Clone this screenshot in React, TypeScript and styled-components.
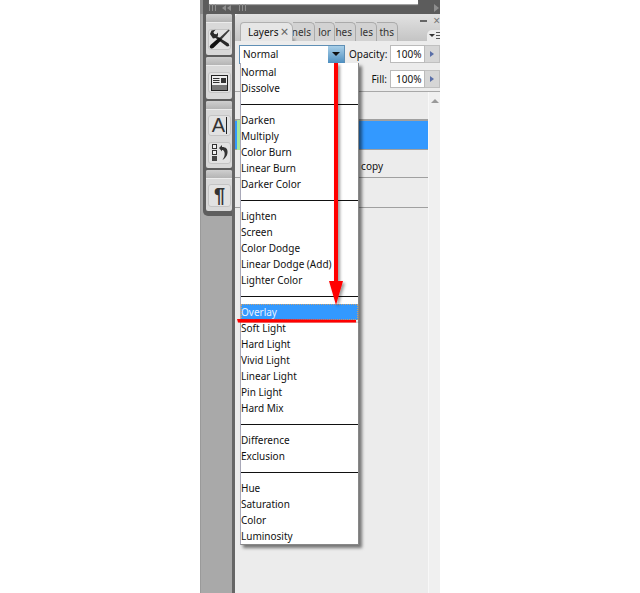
import React from 'react';
import styled, { createGlobalStyle } from 'styled-components';

const blendGroups = [
  ['Normal', 'Dissolve'],
  ['Darken', 'Multiply', 'Color Burn', 'Linear Burn', 'Darker Color'],
  ['Lighten', 'Screen', 'Color Dodge', 'Linear Dodge (Add)', 'Lighter Color'],
  ['Overlay', 'Soft Light', 'Hard Light', 'Vivid Light', 'Linear Light', 'Pin Light', 'Hard Mix'],
  ['Difference', 'Exclusion'],
  ['Hue', 'Saturation', 'Color', 'Luminosity'],
];

const backTabs = [
  { label: 'nels', width: 22 },
  { label: 'lor', width: 20 },
  { label: 'hes', width: 21 },
  { label: 'les', width: 21 },
  { label: 'ths', width: 21 },
];

const WrenchIcon = () => (
  <svg width="21" height="20" viewBox="0 0 21 20">
    {/* wrench */}
    <path
      d="M1 5 L2.5 1.5 L6.5 0.8 L4.4 3.2 L5.4 5 L7.6 5.2 L9 3.4 L9 6.2 L8.4 7.4 L19.6 14.6 L20.4 17 L18 17.4 L6.6 9 L4 9.4 Z"
      fill="#2a2a2a"
    />
    {/* screwdriver shaft */}
    <path d="M19.6 0.6 L20.6 1.6 L12.4 10.4 L10.6 8.8 Z" fill="#3c3c3c" />
    {/* screwdriver handle */}
    <path
      d="M10.6 8.4 L12.8 10.6 L11.6 12 L4.6 18.8 C3.2 20 0.6 19.6 0.8 17.4 C0.9 16.6 1.4 16 2 15.4 L9 9.4 Z"
      fill="#111"
    />
  </svg>
);

const ParagraphsIcon = () => (
  <svg width="17" height="16" viewBox="0 0 17 16">
    <rect x="0.5" y="0.5" width="16" height="15" fill="#eee" stroke="#222" />
    <rect x="10" y="3" width="5" height="5" fill="#333" />
    <path d="M2 3.5 H8.5 M2 5.5 H8.5 M2 7.5 H8.5" stroke="#333" />
    <rect x="1" y="10" width="15" height="5" fill="#777" />
  </svg>
);

const StylesIcon = () => (
  <svg width="18" height="18" viewBox="0 0 18 18">
    <rect x="1.5" y="0.5" width="4" height="4" fill="#f2f2f2" stroke="#333" />
    <rect x="1.5" y="6.5" width="4" height="4" fill="#f2f2f2" stroke="#333" />
    <rect x="1" y="12" width="5" height="5" fill="#444" />
    <path d="M8 4 L11 1 V3 C15 3 17 5 16.5 9 C16.2 12 14 14.5 11.5 16 C13.5 13 14 10.5 13.5 8.5 C13 6.5 12 6 11 6 V7.5 Z" fill="#333" />
  </svg>
);

const Annotations = () => (
  <Overlay width="240" height="593" viewBox="200 0 240 593">
    <defs>
      <filter id="soft" x="-30%" y="-5%" width="180%" height="115%">
        <feDropShadow dx="2" dy="2" stdDeviation="1.5" floodColor="#000" floodOpacity="0.4" />
      </filter>
    </defs>
    <rect x="240" y="37" width="53" height="3" fill="#f00" filter="url(#soft)" />
    <path d="M334 63 H338 V281 H343 L336 305 L329 281 H334 Z" fill="#f00" filter="url(#soft)" />
    <path d="M237 319 L356 320 V322.5 L238 322.5 Z" fill="#f00" filter="url(#soft)" />
  </Overlay>
);

export default function App() {
  return (
    <>
      <GlobalStyle />
      <Stage>
        <TopStrip>
          <Preview />
          <StripControls>
            <Grip />
            <Collapse>
              <LeftTriangle />
              <LeftTriangle />
            </Collapse>
            <Grip />
            <StripEnd />
          </StripControls>
        </TopStrip>
        <Workspace>
          <Dock>
            <DockFrame>
              <DockCard $height={41}>
                <CardHeader />
                <CardButtons>
                  <DockButton $height={21}>
                    <WrenchIcon />
                  </DockButton>
                </CardButtons>
              </DockCard>
              <DockCard $height={42}>
                <CardHeader />
                <CardButtons>
                  <DockButton $height={21}>
                    <ParagraphsIcon />
                  </DockButton>
                </CardButtons>
              </DockCard>
              <DockCard $height={67}>
                <CardHeader />
                <CardButtons>
                  <DockButton $height={21}>
                    <BigGlyph>A</BigGlyph>
                    <Caret />
                  </DockButton>
                  <DockButton $height={22}>
                    <StylesIcon />
                  </DockButton>
                </CardButtons>
              </DockCard>
              <DockCard $height={41}>
                <CardHeader />
                <CardButtons>
                  <DockButton $height={23}>
                    <BigGlyph $bold>¶</BigGlyph>
                  </DockButton>
                </CardButtons>
              </DockCard>
            </DockFrame>
          </Dock>
          <Panel>
            <TabBar>
              <ActiveTab>
                Layers<TabClose>×</TabClose>
              </ActiveTab>
              {backTabs.map((tab) => (
                <BackTab key={tab.label} $width={tab.width}>
                  {tab.label}
                </BackTab>
              ))}
              <WindowButtons>
                <Minimize />
                <CloseGlyph>×</CloseGlyph>
              </WindowButtons>
              <PanelMenu>
                <MenuTriangle />
                <MenuLines />
              </PanelMenu>
            </TabBar>
            <OptionsRow>
              <BlendSelect>
                <BlendValue>Normal</BlendValue>
                <BlendButton>
                  <BlendTriangle />
                </BlendButton>
              </BlendSelect>
              <FieldLabel>Opacity:</FieldLabel>
              <PercentField>100%</PercentField>
              <Stepper>
                <StepperArrow />
              </Stepper>
            </OptionsRow>
            <FillRow>
              <FieldLabel>Fill:</FieldLabel>
              <PercentField>100%</PercentField>
              <Stepper>
                <StepperArrow />
              </Stepper>
            </FillRow>
            <LayersArea>
              <LayerList>
                <LayerRow $height={28} />
                <LayerRow $height={30} $selected />
                <LayerRow $height={28}>
                  <LayerName>copy</LayerName>
                </LayerRow>
                <LayerRow $height={30} />
              </LayerList>
              <Scrollbar>
                <ScrollUp />
              </Scrollbar>
            </LayersArea>
          </Panel>
        </Workspace>
        <BlendMenu>
          {blendGroups.map((group, index) => (
            <React.Fragment key={group[0]}>
              {index > 0 && <MenuDivider />}
              {group.map((name) => (
                <MenuItem key={name} $active={name === 'Overlay'}>
                  {name}
                </MenuItem>
              ))}
            </React.Fragment>
          ))}
        </BlendMenu>
        <GreenMark />
        <Annotations />
      </Stage>
    </>
  );
}

const GlobalStyle = createGlobalStyle`
  html, body {
    margin: 0;
    padding: 0;
    background: #fff;
    overflow: hidden;
  }
  * {
    box-sizing: border-box;
  }
`;

const uiFont = `"Noto Sans", "Liberation Sans", sans-serif`;

const Stage = styled.div`
  position: relative;
  display: flex;
  flex-direction: column;
  width: 240px;
  height: 593px;
  margin-left: 200px;
  overflow: hidden;
  font-family: ${uiFont};
  font-size: 10px;
  color: #111;
`;

const TopStrip = styled.div`
  flex: none;
  height: 14px;
  background: #5c5c5c;
  border-left: 3px solid #8c8c8c;
`;

const Preview = styled.div`
  width: 209px;
  height: 4px;
  margin-left: 6px;
  background: #fff;
  box-shadow: 0 1px 1px #aaa;
`;

const StripControls = styled.div`
  display: flex;
  align-items: flex-start;
  height: 7px;
  padding-left: 6px;
`;

const Grip = styled.span`
  width: 7px;
  height: 7px;
  background: repeating-linear-gradient(90deg, #8e8e8e 0 1px, transparent 1px 3px);
`;

const Collapse = styled.span`
  display: flex;
  align-items: center;
  gap: 1px;
  width: 23px;
  height: 7px;
  padding-left: 6px;
`;

const LeftTriangle = styled.span`
  width: 0;
  height: 0;
  border-top: 3px solid transparent;
  border-bottom: 3px solid transparent;
  border-right: 4px solid #8e8e8e;
`;

const StripEnd = styled.span`
  width: 0;
  height: 0;
  margin-left: auto;
  margin-right: 1px;
  border-top: 4px solid transparent;
  border-bottom: 4px solid transparent;
  border-left: 5px solid #8e8e8e;
`;

const Workspace = styled.div`
  flex: 1;
  display: flex;
  min-height: 0;
`;

const Dock = styled.div`
  flex: none;
  width: 35px;
  background: #a9a9a9;
  border-left: 1px solid #9a9a9a;
  border-right: 3px solid #666;
`;

const DockFrame = styled.div`
  display: flex;
  flex-direction: column;
  gap: 2px;
  height: 202px;
  margin-left: 2px;
  padding-left: 3px;
  background: #5e5e5e;
  border-bottom-left-radius: 5px;
`;

const DockCard = styled.div<{ $height: number }>`
  flex: none;
  display: flex;
  flex-direction: column;
  width: 26px;
  height: ${(props) => props.$height}px;
  background: #d9d9d9;
  border-radius: 2px;
`;

const CardHeader = styled.div`
  flex: none;
  height: 9px;
  background: linear-gradient(#cfcfcf, #b4b4b4);
  border-bottom: 1px solid #ececec;
  border-radius: 2px 2px 0 0;
`;

const CardButtons = styled.div`
  flex: 1;
  display: flex;
  flex-direction: column;
  align-items: center;
  justify-content: center;
  gap: 6px;
  padding-left: 1px;
`;

const DockButton = styled.div<{ $height: number }>`
  flex: none;
  display: flex;
  align-items: center;
  justify-content: center;
  width: 23px;
  height: ${(props) => props.$height}px;
  background: #e2e2e2;
  border: 1px solid #c4c4c4;
  border-radius: 3px;
`;

const BigGlyph = styled.span<{ $bold?: boolean }>`
  font-family: "Liberation Sans", sans-serif;
  font-size: 20px;
  font-weight: ${(props) => (props.$bold ? 700 : 400)};
  line-height: 20px;
  color: #333;
`;

const Caret = styled.span`
  width: 1px;
  height: 17px;
  margin-left: 1px;
  background: #222;
`;

const Panel = styled.div`
  flex: 1;
  display: flex;
  flex-direction: column;
  min-width: 0;
  background: #ececec;
  border-top-left-radius: 4px;
`;

const TabBar = styled.div`
  position: relative;
  flex: none;
  display: flex;
  align-items: flex-end;
  height: 27px;
  padding-left: 5px;
  background: linear-gradient(#e2e2e2, #c4c4c4);
  border-top-left-radius: 4px;
`;

const ActiveTab = styled.div`
  position: relative;
  z-index: 1;
  display: flex;
  align-items: center;
  width: 53px;
  height: 19px;
  padding-left: 7px;
  background: #e6e6e6;
  border: 1px solid #b0b0b0;
  border-bottom: none;
  border-radius: 4px 6px 0 0;
`;

const TabClose = styled.span`
  margin-left: 2px;
  font-size: 14px;
  line-height: 14px;
  color: #666;
`;

const BackTab = styled.div<{ $width: number }>`
  display: flex;
  align-items: center;
  justify-content: flex-end;
  width: ${(props) => props.$width}px;
  height: 19px;
  padding-right: 3px;
  background: #d2d2d2;
  border: 1px solid #aaa;
  border-left: none;
  border-bottom: none;
  border-radius: 0 5px 0 0;
  color: #333;
  overflow: hidden;
  white-space: nowrap;
`;

const WindowButtons = styled.div`
  position: absolute;
  top: 3px;
  right: 0;
  display: flex;
  align-items: center;
  gap: 6px;
  height: 8px;
`;

const Minimize = styled.span`
  width: 7px;
  height: 2px;
  background: #666;
`;

const CloseGlyph = styled.span`
  font-size: 12px;
  line-height: 8px;
  color: #777;
`;

const PanelMenu = styled.div`
  position: absolute;
  right: 0;
  bottom: 0;
  display: flex;
  align-items: center;
  gap: 1px;
  width: 13px;
  height: 11px;
  padding-left: 2px;
  background: #ececec;
  border-top-left-radius: 5px;
`;

const MenuTriangle = styled.span`
  width: 0;
  height: 0;
  border-left: 3px solid transparent;
  border-right: 3px solid transparent;
  border-top: 3px solid #333;
`;

const MenuLines = styled.span`
  width: 5px;
  height: 7px;
  border-top: 1px solid #555;
  border-bottom: 1px solid #555;
  background: linear-gradient(#555, #555) center / 100% 1px no-repeat;
`;

const OptionsRow = styled.div`
  flex: none;
  display: flex;
  align-items: center;
  height: 24px;
  padding: 2px 0 0 4px;
`;

const FillRow = styled.div`
  flex: none;
  display: flex;
  justify-content: flex-end;
  align-items: center;
  height: 27px;
  padding-top: 2px;
  border-bottom: 1px solid #a8a8a8;
`;

const BlendSelect = styled.div`
  display: flex;
  width: 106px;
  height: 19px;
  margin-right: 4px;
  background: #fff;
  border: 1px solid #5f8fb5;
`;

const BlendValue = styled.div`
  flex: 1;
  padding-left: 3px;
  line-height: 17px;
`;

const BlendButton = styled.div`
  display: flex;
  align-items: center;
  justify-content: center;
  width: 16px;
  background: linear-gradient(#a8cfe8, #4e8fc0);
`;

const BlendTriangle = styled.span`
  width: 0;
  height: 0;
  border-left: 4px solid transparent;
  border-right: 4px solid transparent;
  border-top: 4px solid #111;
`;

const FieldLabel = styled.span`
  width: 38px;
  margin-right: 3px;
  text-align: right;
  white-space: nowrap;
`;

const PercentField = styled.div`
  width: 35px;
  height: 18px;
  padding-left: 5px;
  background: #fff;
  border: 1px solid #bbb;
  line-height: 16px;
`;

const Stepper = styled.div`
  display: flex;
  align-items: center;
  justify-content: center;
  width: 15px;
  height: 18px;
  background: #d6d6d6;
  border: 1px solid #c0c0c0;
  border-left: none;
`;

const StepperArrow = styled.span`
  width: 0;
  height: 0;
  border-top: 3px solid transparent;
  border-bottom: 3px solid transparent;
  border-left: 4px solid #5a6fa8;
`;

const LayersArea = styled.div`
  flex: 1;
  display: flex;
  min-height: 0;
`;

const LayerList = styled.div`
  flex: 1;
  min-width: 0;
`;

const LayerRow = styled.div<{ $height: number; $selected?: boolean }>`
  display: flex;
  align-items: center;
  justify-content: flex-end;
  height: ${(props) => props.$height}px;
  padding-right: 45px;
  background: ${(props) => (props.$selected ? '#3399ff' : 'transparent')};
  border-top: ${(props) => (props.$selected ? '1px solid #a0a0a0' : 'none')};
  border-bottom: 1px solid #a0a0a0;
`;

const LayerName = styled.span`
  position: relative;
  top: 2px;
`;

const Scrollbar = styled.div`
  flex: none;
  display: flex;
  justify-content: center;
  width: 12px;
  padding-top: 7px;
  background: #f0f0f0;
  border-left: 1px solid #f8f8f8;
`;

const ScrollUp = styled.span`
  width: 0;
  height: 0;
  border-left: 4px solid transparent;
  border-right: 4px solid transparent;
  border-bottom: 4px solid #999;
`;

const BlendMenu = styled.div`
  position: absolute;
  top: 63px;
  left: 40px;
  width: 119px;
  height: 482px;
  padding-top: 1px;
  background: #fff;
  border: 1px solid #a8a8b8;
  border-top: none;
  border-bottom-color: #888;
  border-right-color: #888;
  box-shadow: 3px 3px 3px rgba(0, 0, 0, 0.5);
`;

const MenuItem = styled.div<{ $active?: boolean }>`
  height: 16px;
  line-height: 16px;
  white-space: nowrap;
  background: ${(props) => (props.$active ? '#3399ff' : 'transparent')};
  color: ${(props) => (props.$active ? '#e8f2ff' : '#111')};
  outline: ${(props) => (props.$active ? '1px dotted #c9a070' : 'none')};
  outline-offset: -1px;
`;

const MenuDivider = styled.div`
  height: 16px;
  background: linear-gradient(#111, #111) center / 100% 1px no-repeat;
`;

const GreenMark = styled.div`
  position: absolute;
  top: 120px;
  left: 37px;
  width: 3px;
  height: 30px;
  background: #a4e8a0;
`;

const Overlay = styled.svg`
  position: absolute;
  top: 0;
  left: 0;
  pointer-events: none;
`;
